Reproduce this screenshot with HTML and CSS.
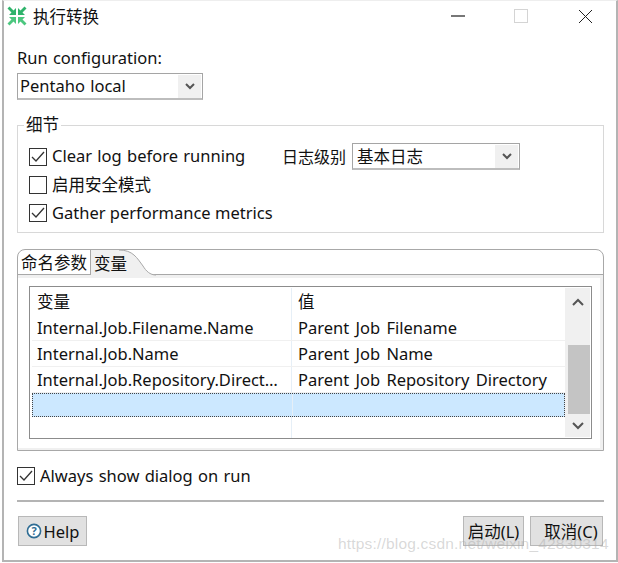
FILE: index.html
```html
<!DOCTYPE html>
<html lang="zh-CN">
<head>
  <meta charset="UTF-8">
  <title>执行转换</title>
  <link rel="stylesheet" href="styles.css">
</head>
<body>
  <div class="window">
    <div class="titlebar">
      <svg class="app-icon" width="20" height="20" viewBox="0 0 20 20">
        <g fill="#2fb36b">
          <polygon points="9,9 2,9 4.5,6.5 0.5,2.5 2.5,0.5 6.5,4.5 9,2"/>
          <polygon points="11,9 18,9 15.5,6.5 19.5,2.5 17.5,0.5 13.5,4.5 11,2"/>
        </g>
        <g fill="#4cc77f">
          <polygon points="9,11 2,11 4.5,13.5 0.5,17.5 2.5,19.5 6.5,15.5 9,18"/>
          <polygon points="11,11 18,11 15.5,13.5 19.5,17.5 17.5,19.5 13.5,15.5 11,18"/>
        </g>
      </svg>
      <span class="title">执行转换</span>
      <div class="win-buttons">
        <span class="win-min"></span>
        <span class="win-max"></span>
        <svg class="win-close" width="15" height="15" viewBox="0 0 15 15">
          <path d="M1 1L14 14M14 1L1 14" stroke="#222" fill="none"/>
        </svg>
      </div>
    </div>

    <div class="content">
      <div class="run-label">Run configuration:</div>
      <div class="select select-run">
        <span class="select-text">Pentaho local</span>
        <span class="select-btn">
          <svg width="10" height="7" viewBox="0 0 10 7"><path d="M1 1L5 5L9 1" stroke="#555" stroke-width="2" fill="none"/></svg>
        </span>
      </div>

      <div class="group">
        <span class="legend">细节</span>
        <div class="group-row">
          <label class="check check-wide">
            <span class="box">
              <svg width="14" height="12" viewBox="0 0 14 12"><path d="M1 6L5 10L13 1" stroke="#333" stroke-width="1.3" fill="none"/></svg>
            </span>
            <span class="check-text">Clear log before running</span>
          </label>
          <span class="level-label">日志级别</span>
          <div class="select select-level">
            <span>基本日志</span>
            <span class="select-btn">
              <svg width="10" height="7" viewBox="0 0 10 7"><path d="M1 1L5 5L9 1" stroke="#555" stroke-width="2" fill="none"/></svg>
            </span>
          </div>
        </div>
        <div class="group-row">
          <label class="check"><span class="box"></span><span class="check-text">启用安全模式</span></label>
        </div>
        <div class="group-row">
          <label class="check">
            <span class="box">
              <svg width="14" height="12" viewBox="0 0 14 12"><path d="M1 6L5 10L13 1" stroke="#333" stroke-width="1.3" fill="none"/></svg>
            </span>
            <span class="check-text check-tight">Gather performance metrics</span>
          </label>
        </div>
      </div>

      <div class="folder">
        <div class="tabs">
          <span class="tab">命名参数</span>
          <span class="tab tab-active">
            <svg class="tab-curve" width="37" height="26" viewBox="0 0 37 26">
              <path d="M0 0C14 0 18 8 24 16C27 21 31 25 37 25L0 25Z" fill="#f0f0f0"/>
              <path d="M0 0C14 0 18 8 24 16C27 21 31 25 37 25" fill="none" stroke="#a8a8a8"/>
            </svg>
            <span class="tab-text">变量</span>
          </span>
        </div>
        <div class="panel">
          <div class="table">
            <div class="table-body">
              <div class="tr tr-head"><span>变量</span><span>值</span></div>
              <div class="tr"><span>Internal.Job.Filename.Name</span><span>Parent Job Filename</span></div>
              <div class="tr"><span>Internal.Job.Name</span><span>Parent Job Name</span></div>
              <div class="tr"><span class="clip">Internal.Job.Repository.Directory</span><span>Parent Job Repository Directory</span></div>
              <div class="tr tr-selected"><span></span><span></span></div>
              <div class="tr tr-empty"><span></span><span></span></div>
            </div>
            <div class="scrollbar">
              <svg width="12" height="8" viewBox="0 0 12 8"><path d="M1 7L6 2L11 7" stroke="#555" stroke-width="2" fill="none"/></svg>
              <div class="thumb"></div>
              <svg width="12" height="8" viewBox="0 0 12 8"><path d="M1 1L6 6L11 1" stroke="#555" stroke-width="2" fill="none"/></svg>
            </div>
          </div>
        </div>
      </div>

      <label class="check check-always">
        <span class="box">
          <svg width="14" height="12" viewBox="0 0 14 12"><path d="M1 6L5 10L13 1" stroke="#333" stroke-width="1.3" fill="none"/></svg>
        </span>
        <span class="check-text">Always show dialog on run</span>
      </label>

      <div class="separator"></div>

      <div class="footer">
        <button class="btn btn-help" type="button">
          <svg width="16" height="16" viewBox="0 0 16 16">
            <circle cx="8" cy="8" r="6.6" fill="#fff" stroke="#2f6d94" stroke-width="1.6"/>
            <text x="8" y="11.8" text-anchor="middle" class="help-mark">?</text>
          </svg>
          Help
        </button>
        <div class="footer-right">
          <button class="btn btn-start" type="button">启动(L)</button>
          <button class="btn btn-cancel" type="button">取消(C)</button>
        </div>
      </div>
    </div>
  </div>
  <div class="watermark">https://blog.csdn.net/weixin_42830314</div>
</body>
</html>
```

FILE: styles.css
```css
html, body {
    margin: 0;
    padding: 0;
    background: #fff;
}
body {
    position: relative;
    width: 618px;
    height: 563px;
    overflow: hidden;
    font-family: "Noto Sans", "Noto Sans CJK SC", sans-serif;
    font-size: 16.5px;
    word-spacing: 1px;
    color: #111;
}
.window {
    box-sizing: border-box;
    width: 616px;
    height: 562px;
    margin-left: 2px;
    border: 1px solid #b4b4b4;
    border-width: 1px 2px 2px 2px;
    border-top-color: #eee;
    background: #fff;
}

/* title bar */
.titlebar {
    display: flex;
    align-items: center;
    height: 30px;
    padding-left: 3px;
}
.app-icon {
    margin-right: 6px;
}
.win-buttons {
    display: flex;
    align-items: center;
    margin-left: auto;
    margin-right: 23px;
}
.win-min {
    width: 14px;
    height: 2px;
    margin-right: 49px;
    background: #777;
}
.win-max {
    box-sizing: border-box;
    width: 14px;
    height: 14px;
    margin-right: 50px;
    border: 1px solid #d4d4d4;
}

.content {
    padding: 0 10px 0 13px;
}
.run-label {
    margin-top: 16px;
    line-height: 22px;
}

/* combo boxes */
.select {
    box-sizing: border-box;
    display: flex;
    align-items: center;
    justify-content: space-between;
    height: 27px;
    padding: 1px 1px 1px 2px;
    border: 1px solid #a5a5a5;
    border-bottom: 2px solid #bdbdbd;
    background: #fff;
}
.select-run {
    width: 186px;
    margin-top: 4px;
}
.select-text {
    margin-bottom: 2px;
}
.select-level {
    width: 168px;
    margin-left: 6px;
    padding-left: 4px;
}
.select-btn {
    display: flex;
    align-items: center;
    justify-content: center;
    width: 23px;
    height: 23px;
    background: #f0f0f0;
}

/* details group */
.group {
    position: relative;
    box-sizing: border-box;
    display: flex;
    flex-direction: column;
    gap: 2px;
    width: 587px;
    height: 108px;
    margin-top: 25px;
    padding: 17px 11px 0;
    border: 1px solid #d8d8d8;
}
.legend {
    position: absolute;
    top: -12px;
    left: 6px;
    padding: 0 2px;
    background: #fff;
    line-height: 22px;
}
.group-row {
    display: flex;
    align-items: center;
    min-height: 26px;
}
.level-label {
    margin-bottom: 2px;
    font-size: 16px;
    white-space: nowrap;
}
.check {
    display: flex;
    align-items: center;
    gap: 5px;
}
.check-text {
    margin-bottom: 2px;
}
.check-tight {
    word-spacing: 0;
}
.check-wide {
    width: 253px;
}
.box {
    box-sizing: border-box;
    display: flex;
    align-items: center;
    justify-content: center;
    flex: none;
    width: 18px;
    height: 18px;
    border: 1px solid #333;
    background: #fff;
}

/* tab folder */
.folder {
    box-sizing: border-box;
    width: 587px;
    height: 202px;
    margin-top: 16px;
    border: 1px solid #a8a8a8;
    border-top-left-radius: 8px;
    border-top-right-radius: 8px;
}
.tabs {
    display: flex;
    box-sizing: border-box;
    height: 25px;
    border-bottom: 1px solid #a8a8a8;
}
.tab {
    box-sizing: border-box;
    display: flex;
    align-items: center;
    flex: none;
    width: 73px;
    height: 24px;
    padding-left: 3px;
    border-right: 1px solid #a8a8a8;
}
.tab-active {
    position: relative;
    width: 28px;
    height: 25px;
    border-right: 0;
    background: #f0f0f0;
    white-space: nowrap;
}
.tab-curve {
    position: absolute;
    top: 0;
    left: 28px;
}
.tab-text {
    position: relative;
}
.panel {
    box-sizing: border-box;
    height: 175px;
    padding: 8px 12px 0 11px;
    border-top: 3px solid #f0f0f0;
    border-right: 3px solid #f0f0f0;
    border-bottom: 2px solid #f0f0f0;
}

/* variables table */
.table {
    box-sizing: border-box;
    display: flex;
    width: 563px;
    height: 153px;
    padding: 1px;
    border: 1px solid #8c8c8c;
    background: #fff;
    word-spacing: 2px;
}
.table-body {
    flex: 1;
    min-width: 0;
    padding-left: 1px;
}
.tr {
    box-sizing: border-box;
    display: grid;
    grid-template-columns: 260px 1fr;
    height: 26px;
    line-height: 25px;
    border-bottom: 1px solid #f0f0f0;
}
.tr span {
    padding-left: 5px;
    white-space: nowrap;
    border-right: 1px solid #e6eff7;
}
.tr span:last-child {
    padding-left: 6px;
    border-right: 0;
}
.tr-head {
    height: 27px;
    line-height: 28px;
    border-bottom: 0;
}
.tr .clip {
    padding-right: 7px;
    overflow: hidden;
    text-overflow: ellipsis;
}
.tr-selected {
    height: 24px;
    border: 1px dotted #444;
    background: #cce8ff;
}
.tr-empty {
    height: 21px;
    border-bottom: 0;
}
.scrollbar {
    display: flex;
    flex-direction: column;
    align-items: center;
    flex: none;
    width: 25px;
    background: #f0f0f0;
    padding-top: 10px;
    box-sizing: border-box;
}
.thumb {
    width: 22px;
    height: 69px;
    margin: 39px 0 8px 2px;
    background: #c4c4c4;
}

.check-always {
    margin-top: 16px;
    height: 18px;
}
.separator {
    height: 2px;
    width: 587px;
    margin-top: 15px;
    background: #b4b4b4;
}

/* bottom buttons */
.footer {
    display: flex;
    justify-content: space-between;
    width: 586px;
    margin-top: 14px;
    padding-left: 1px;
    box-sizing: border-box;
}
.footer-right {
    display: flex;
    gap: 6px;
}
.btn {
    box-sizing: border-box;
    display: flex;
    align-items: center;
    justify-content: center;
    height: 30px;
    padding: 0;
    border: 1px solid #b8b8b8;
    background: #e1e1e1;
    color: #111;
    font: inherit;
}
.btn-help {
    width: 69px;
    gap: 2px;
}
.btn-start {
    width: 61px;
}
.btn-cancel {
    width: 73px;
    padding-left: 9px;
}
.help-mark {
    font-size: 11px;
    font-weight: bold;
    fill: #2f6d94;
}

.watermark {
    position: absolute;
    top: 535px;
    left: 338px;
    font-family: "Liberation Sans", sans-serif;
    font-size: 15.5px;
    letter-spacing: 0.19px;
    word-spacing: 0;
    color: rgba(170, 170, 170, 0.45);
    white-space: nowrap;
}
```
